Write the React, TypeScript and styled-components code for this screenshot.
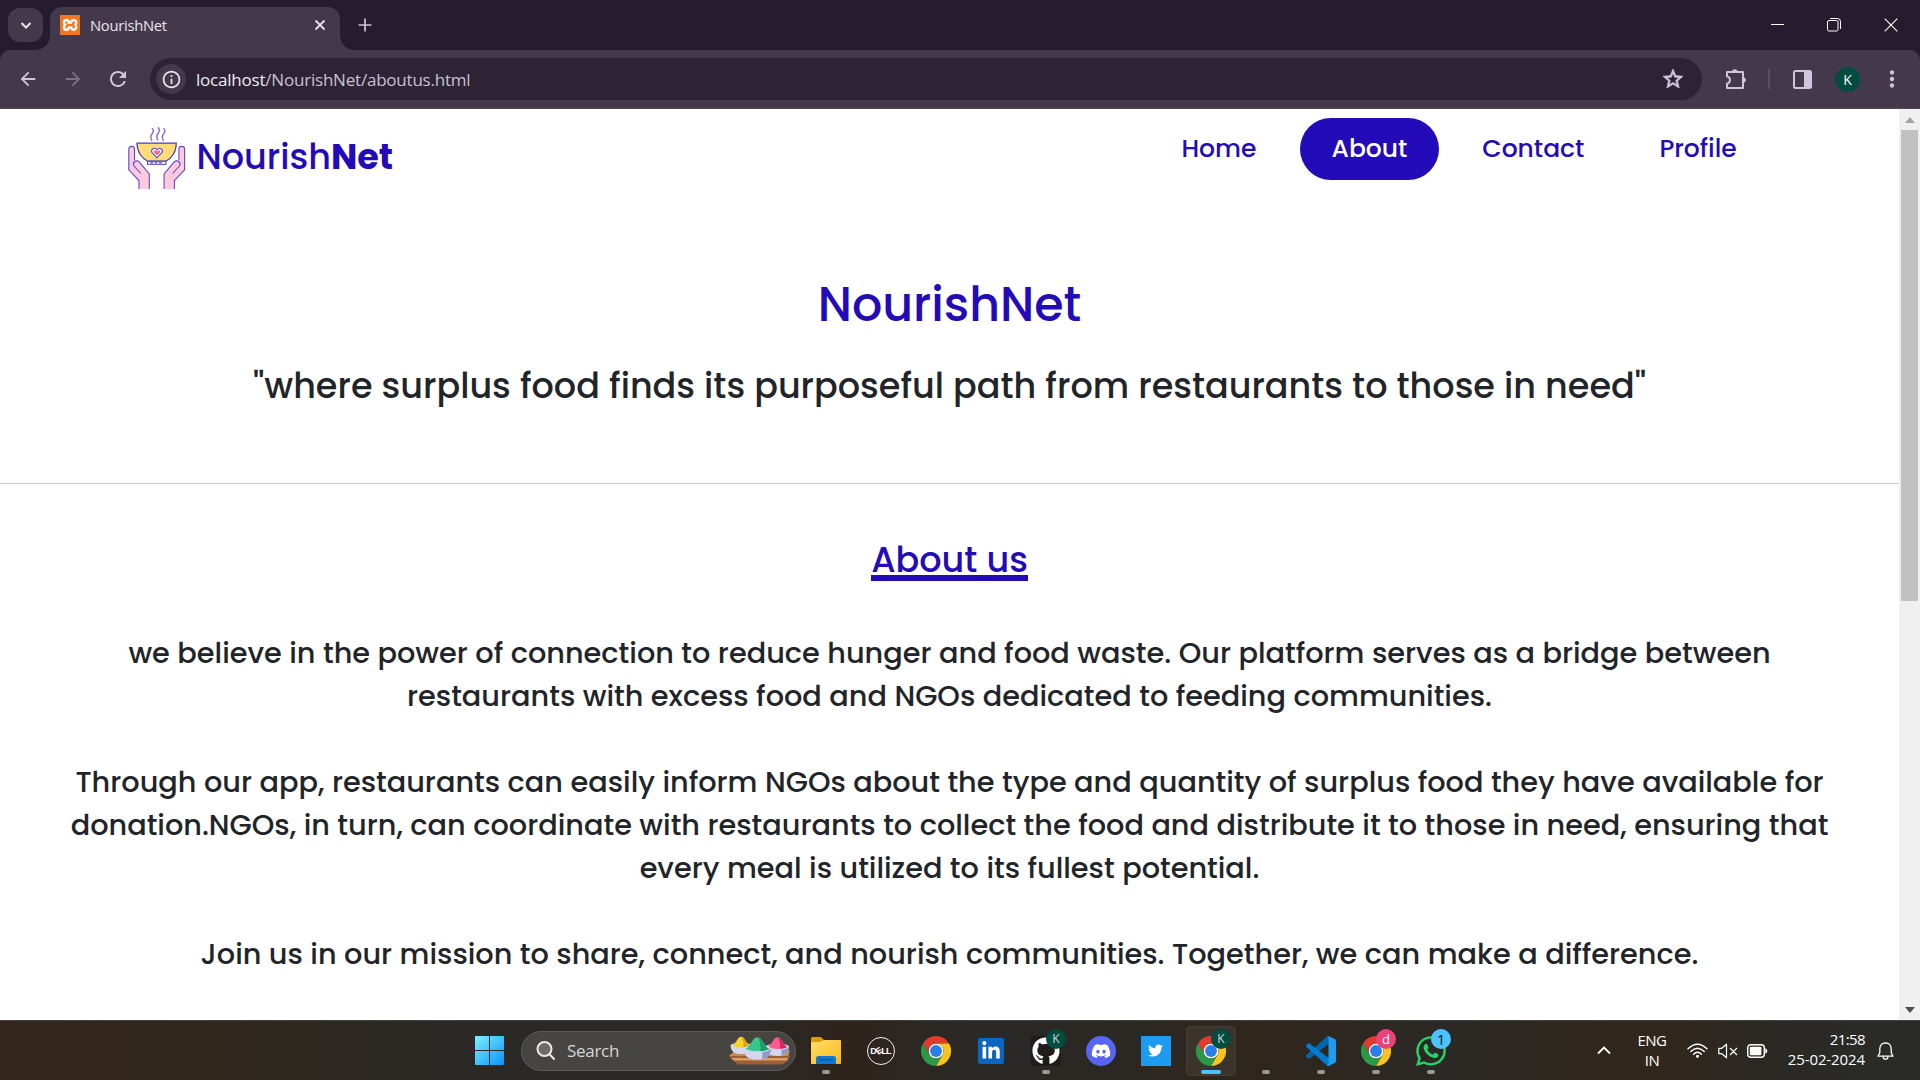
import React from "react";
import styled, { createGlobalStyle } from "styled-components";
import { FaGithub, FaDiscord, FaTwitter, FaWhatsapp, FaLinkedinIn } from "react-icons/fa";
import { SiXampp } from "react-icons/si";
import { MdStarOutline, MdArrowBack, MdArrowForward, MdRefresh, MdInfoOutline, MdMoreVert } from "react-icons/md";

const BLUE = "#230bb9";
const POPPINS = `Poppins, Inter, sans-serif`;
const SEGOE = `"Open Sans", "Noto Sans", sans-serif`;

const GlobalStyle = createGlobalStyle`
  * { box-sizing: border-box; }
  body { margin: 0; overflow: hidden; background: #fff; }
  svg { display: block; flex: none; }
`;

const Screen = styled.div`
  width: 1920px;
  height: 1080px;
  display: flex;
  flex-direction: column;
  overflow: hidden;
  font-family: ${SEGOE};
`;

/* ---------- browser chrome ---------- */

const TabStrip = styled.div`
  height: 50px;
  flex: none;
  display: flex;
  align-items: flex-end;
  background: #251c2e;
  padding: 0 1px 0 8px;
`;

const TabSearch = styled.button`
  width: 35px;
  height: 34px;
  margin: 0 7px 8px 0;
  border: 0;
  padding: 0;
  border-radius: 12px;
  background: #43394b;
  display: flex;
  align-items: center;
  justify-content: center;
`;

const Tab = styled.div`
  position: relative;
  width: 290px;
  height: 43px;
  border-radius: 12px 12px 0 0;
  background: #43394b;
  display: flex;
  align-items: center;
  padding: 0 12px 7px 10px;
  &::before, &::after {
    content: "";
    position: absolute;
    bottom: 0;
    width: 14px;
    height: 14px;
  }
  &::before {
    left: -14px;
    background: radial-gradient(circle at 0 0, transparent 13.5px, #43394b 14px);
  }
  &::after {
    right: -14px;
    background: radial-gradient(circle at 100% 0, transparent 13.5px, #43394b 14px);
  }
`;

const Favicon = styled.span`
  width: 20px;
  height: 20px;
  border-radius: 2px;
  background: #fff;
  box-shadow: inset 0 0 0 1px #e8701f;
  color: #f5761f;
  display: flex;
`;

const TabTitle = styled.span`
  flex: 1;
  margin-left: 10px;
  font-size: 14.8px;
  line-height: 20px;
  letter-spacing: -0.3px;
  color: #e9e3ec;
`;

const NewTab = styled.div`
  width: 49px;
  height: 50px;
  display: flex;
  align-items: center;
  justify-content: center;
`;

const WindowButtons = styled.div`
  margin-left: auto;
  height: 50px;
  display: flex;
`;

const WindowButton = styled.div<{ $w?: number }>`
  width: ${(p) => p.$w ?? 57}px;
  height: 49px;
  display: flex;
  align-items: center;
  justify-content: center;
`;

const ToolbarBack = styled.div`
  flex: none;
  background: #251c2e;
`;

const Toolbar = styled.div`
  height: 59px;
  background: #43394b;
  border-radius: 10px 10px 0 0;
  border-bottom: 1px solid #51475a;
  display: flex;
  align-items: center;
  color: #d2c4dc;
`;

const NavButton = styled.div<{ $dim?: boolean }>`
  width: 45px;
  height: 45px;
  display: flex;
  align-items: center;
  justify-content: center;
  color: ${(p) => (p.$dim ? "#7b7085" : "#d2c4dc")};
`;

const NavButtons = styled.div`
  display: flex;
  width: 150px;
  padding-left: 5px;
`;

const Omnibox = styled.div`
  width: 1552px;
  height: 42px;
  border-radius: 21px;
  background: #2c2335;
  display: flex;
  align-items: center;
  padding: 0 17px 0 6px;
`;

const SiteInfo = styled.span`
  width: 30px;
  height: 30px;
  border-radius: 50%;
  background: #43394b;
  color: #e9e3ec;
  display: flex;
  align-items: center;
  justify-content: center;
`;

const Url = styled.span`
  flex: 1;
  margin-left: 10px;
  padding-top: 2px;
  font-size: 17px;
  line-height: 24px;
  letter-spacing: -0.21px;
  color: #c9c1cf;
  b { font-weight: 400; color: #efe9f2; }
`;

const Star = styled(MdStarOutline)`
  stroke: currentColor;
  stroke-width: 0.7px;
`;

const ToolbarActions = styled.div`
  flex: 1;
  display: flex;
  align-items: center;
  padding-left: 23px;
`;

const Separator = styled.span`
  width: 2px;
  height: 20px;
  margin: 0 23px 0 21px;
  background: #5b5065;
`;

const Avatar = styled.span`
  width: 25px;
  height: 25px;
  margin: 0 19px 0 23px;
  border-radius: 50%;
  background: #004d40;
  color: #fff;
  font-size: 14px;
  line-height: 25px;
  text-align: center;
`;

/* ---------- page ---------- */

const Viewport = styled.div`
  flex: 1;
  min-height: 0;
  display: flex;
`;

const Page = styled.main`
  width: 1899px;
  overflow: hidden;
  background: #fff;
  color: #212529;
  font-family: ${POPPINS};
  font-weight: 500;
`;

const Header = styled.header`
  height: 167px;
  display: flex;
  justify-content: space-between;
  padding: 9px 131px 0 127.5px;
`;

const Brand = styled.div`
  display: flex;
  padding-top: 9px;
`;

const BrandName = styled.span`
  margin: 9px 0 0 11px;
  font-size: 35px;
  line-height: 42px;
  color: ${BLUE};
  b { font-weight: 700; }
`;

const Nav = styled.nav`
  display: flex;
  gap: 12.5px;
`;

const NavLink = styled.a<{ $active?: boolean }>`
  height: 62px;
  padding: 0 31.25px;
  border-radius: 31px;
  font-size: 25px;
  line-height: 61px;
  color: ${(p) => (p.$active ? "#fff" : BLUE)};
  background: ${(p) => (p.$active ? BLUE : "transparent")};
`;

const Hero = styled.section`
  height: 208px;
  border-bottom: 1px solid #c8c9ca;
  text-align: center;
`;

const Title = styled.h1`
  margin: 0 0 31px;
  font-size: 47.5px;
  line-height: 58px;
  font-weight: 500;
  color: ${BLUE};
`;

const Tagline = styled.h2`
  margin: 0;
  font-size: 35px;
  line-height: 42px;
  font-weight: 500;
`;

const About = styled.section`
  display: flex;
  flex-direction: column;
  align-items: center;
  padding: 55px 60px 0;
`;

const AboutTitle = styled.h2`
  margin: 0 0 51px;
  height: 42px;
  border-bottom: 6px solid ${BLUE};
  font-size: 35px;
  line-height: 42px;
  font-weight: 500;
  color: ${BLUE};
`;

const Paragraph = styled.p`
  margin: 0 0 43px;
  font-size: 28.75px;
  line-height: 43px;
  text-align: center;
`;

const Scrollbar = styled.div`
  width: 21px;
  background: #f0f0f0;
  display: flex;
  flex-direction: column;
  align-items: center;
  justify-content: space-between;
`;

const ScrollTop = styled.div`
  display: flex;
  flex-direction: column;
  align-items: center;
`;

const ScrollArrow = styled.div`
  height: 21px;
  display: flex;
  align-items: center;
`;

const ScrollThumb = styled.div`
  width: 17px;
  height: 471px;
  background: #c1c1c1;
`;

/* ---------- taskbar ---------- */

const Taskbar = styled.footer`
  height: 60px;
  flex: none;
  display: flex;
  align-items: center;
  border-top: 1px solid #42403d;
  background: linear-gradient(90deg, #33251a 0, #30261c 200px, #2a2926 460px, #2a2926 760px, #2f231b 850px, #2a2926 950px,
    #2b2823 1120px, #2f261c 1260px, #2b2926 1450px, #31261b 1640px, #2a2926 1800px, #2a2b28 1920px);
  color: #fff;
`;

const StartButton = styled.div`
  margin: 0 17px 0 475px;
`;

const SearchBox = styled.div`
  width: 275px;
  height: 40px;
  border-radius: 20px;
  background: #474542;
  border: 1px solid #5e5c59;
  display: flex;
  align-items: center;
  padding: 0 4px 0 14px;
`;

const SearchText = styled.span`
  flex: 1;
  margin-left: 12px;
  font-size: 17px;
  line-height: 24px;
  letter-spacing: -0.3px;
  color: #d6d5d4;
`;

const Apps = styled.div`
  display: flex;
  margin-left: 2px;
`;

const AppCell = styled.div`
  width: 55px;
  height: 59px;
  display: flex;
  flex-direction: column;
  align-items: center;
  justify-content: center;
  position: relative;
`;

const AppTile = styled.div<{ $active?: boolean }>`
  width: 50px;
  height: 50px;
  border-radius: 5px;
  display: flex;
  align-items: center;
  justify-content: center;
  background: ${(p) => (p.$active ? "#3b342c" : "transparent")};
  box-shadow: ${(p) => (p.$active ? "inset 0 0 0 1px #453f38" : "none")};
`;

const Indicator = styled.span<{ $active?: boolean }>`
  position: absolute;
  bottom: 6px;
  width: ${(p) => (p.$active ? 20 : 8)}px;
  height: 4px;
  border-radius: 2px;
  background: ${(p) => (p.$active ? "#4cc2ff" : "#9c9894")};
`;

const Badge = styled.span<{ $bg: string; $fg: string; $size: number }>`
  position: absolute;
  top: 8px;
  left: 28px;
  width: 20px;
  height: 20px;
  border-radius: 50%;
  background: ${(p) => p.$bg};
  color: ${(p) => p.$fg};
  font-size: ${(p) => p.$size}px;
  line-height: 20px;
  text-align: center;
`;

const Square = styled.span<{ $bg: string; $size: number; $r?: number }>`
  width: ${(p) => p.$size}px;
  height: ${(p) => p.$size}px;
  border-radius: ${(p) => p.$r ?? 0}px;
  background: ${(p) => p.$bg};
  color: #fff;
  display: flex;
  align-items: center;
  justify-content: center;
`;

const DellRing = styled.span`
  width: 28px;
  height: 28px;
  border: 1.5px solid #f2f2f2;
  border-radius: 50%;
  display: flex;
  align-items: center;
  justify-content: center;
  font: 700 9px/10px "Liberation Sans", Arial, sans-serif;
  letter-spacing: -0.7px;
  i { font-style: normal; transform: rotate(-35deg); }
`;

const Tray = styled.div`
  margin-left: auto;
  display: flex;
  align-items: center;
  padding-right: 26px;
`;

const Language = styled.div`
  width: 40px;
  margin: 0 15px 1px 21px;
  text-align: center;
  font-size: 15px;
  line-height: 20px;
  letter-spacing: -0.5px;
`;

const Status = styled.div`
  display: flex;
  gap: 9.5px;
  align-items: center;
`;

const Clock = styled.div`
  width: 90px;
  margin: 0 12px 3px 7px;
  text-align: right;
  font-size: 15px;
  line-height: 20px;
  letter-spacing: -0.1px;
`;

const Time = styled.div`
  letter-spacing: -0.6px;
`;

/* ---------- drawings ---------- */

const Hand = () => (
  <g>
    <path d="M11 62V53.5L.8 42.8V22.2C.8 18.4 6.5 18.4 6.5 22.2V36C8 33.6 11 34.2 12.6 36L21.3 46.5V62Z" fill="#ffcade" />
    <path d="M11 62V53.5L.8 42.8V22.2C.8 18.4 6.5 18.4 6.5 22.2V33.5M12.8 46.5L6 39C3.8 35.8 8.2 32.2 11.2 35L21.3 47V62" fill="none" stroke="#5b4cc8" strokeWidth="1.1" />
  </g>
);

const BrandMark = () => (
  <svg width="58" height="63" viewBox="0 0 58 63">
    <g fill="none" stroke="#7c70d6" strokeWidth="1.4">
      <path d="M24 1.2Q26.5 3.5 24.3 6.5Q21.5 10 24 14" />
      <path d="M30 .3Q32.5 3 30.3 6Q27.5 9.5 30 13.5" />
      <path d="M35.5 1.2Q38 3.5 35.8 6.5Q33 10 35.5 14" />
    </g>
    <path d="M9 16.2H48.3C48.3 25 43.5 31.5 38 34H19.5C14 31.5 9 25 9 16.2Z" fill="#ffdc78" stroke="#4a3ac2" strokeWidth="1.2" />
    <rect x="19.5" y="34.3" width="18.5" height="3" fill="#fff" stroke="#4a3ac2" strokeWidth="1" />
    <path d="M22 35.8H35.5" stroke="#4a3ac2" strokeWidth="1" strokeDasharray="3 1.5" />
    <path d="M29 30.8L23.9 25.4C22.4 22.5 26.5 19.6 29 22.7C31.5 19.6 35.6 22.5 34.1 25.4Z" fill="#fff" stroke="#5b4cc8" strokeWidth="1.1" />
    <path d="M29 28.5L25.9 25.2C25.6 22.9 28 22.6 29 24.4C30 22.6 32.4 22.9 32.1 25.2Z" fill="#ff5f88" />
    <Hand />
    <g transform="matrix(-1 0 0 1 57.4 0)"><Hand /></g>
  </svg>
);

const ChromeIcon = () => (
  <svg width="30" height="30" viewBox="0 0 48 48">
    <circle cx="24" cy="24" r="12" fill="#fff" />
    <path fill="#e23b2e" d="M24 12H44.78a23.99 23.99 0 0 0-41.56 0L13.61 30A12 12 0 0 1 24 12Z" />
    <path fill="#fcc31e" d="M34.39 30L24 48A23.99 23.99 0 0 0 44.78 12H24A12 12 0 0 1 34.39 30Z" />
    <path fill="#2a9a48" d="M13.61 30L3.22 12A23.99 23.99 0 0 0 24 48L34.39 30A12 12 0 0 1 13.61 30Z" />
    <circle cx="24" cy="24" r="9.5" fill="#2b7de9" />
  </svg>
);

const ExtensionIcon = () => (
  <svg width="22" height="22" viewBox="0 0 22 22" fill="none" stroke="#d2c4dc" strokeWidth="2" strokeLinejoin="round">
    <path d="M2 4H18V20H2V15.8Q5 14.8 5 12T2 8.2Z" />
    <path d="M7 4A2.8 2.8 0 0 1 12.6 4ZM18 9.2A2.8 2.8 0 0 1 18 14.8Z" fill="#d2c4dc" stroke="none" />
  </svg>
);

const WindowsLogo = () => (
  <svg width="29" height="29" viewBox="0 0 29 29">
    <defs>
      <linearGradient id="win" x1="0" y1="0" x2="29" y2="29" gradientUnits="userSpaceOnUse">
        <stop stopColor="#7df0ff" />
        <stop offset="1" stopColor="#0a93fb" />
      </linearGradient>
    </defs>
    <path fill="url(#win)" d="M1 0H14V14H0V1Q0 0 1 0ZM15 0H28Q29 0 29 1V14H15ZM0 15H14V29H1Q0 29 0 28ZM15 15H29V28Q29 29 28 29H15Z" />
  </svg>
);

const Bowl = ({ x, y, s, a, b }: { x: number; y: number; s: number; a: string; b: string }) => (
  <g transform={`translate(${x} ${y}) scale(${s})`}>
    <path d="M0 11.5Q0 9 6 8.5H22Q28 9 28 11.5Q27 21 19 22Q14 23 9 22Q1 21 0 11.5Z" fill="#d4d6f0" />
    <path d="M19 15Q25 14 28 11.5Q27 21 19 22Z" fill="#9598cf" />
    <path d="M2 11.5C7 9 9 1.5 12 .3Q14 -.8 16 .3C19 1.5 21 9 26 11.5Q14 16.5 2 11.5Z" fill={a} />
    <path d="M15 0Q17 .3 18 2.5C20 7 22 10 26 11.5Q22 13.5 17 13.8Q18 6 15 0Z" fill={b} />
  </g>
);

const HoliBowls = () => (
  <svg width="63" height="30" viewBox="0 0 63 30">
    <path d="M1 20L7 14.5H62L60 22L55 26H7Z" fill="#c98b50" />
    <path d="M1 20H62Q60 26 54 28.5H10Z" fill="#9b5f33" />
    <path d="M3 22H60L59 24.5H6Z" fill="#dba066" />
    <Bowl x={2.5} y={1} s={0.76} a="#f6d32c" b="#d7a413" />
    <Bowl x={38} y={1.5} s={0.82} a="#ff5b93" b="#d8245f" />
    <Bowl x={15.5} y={1.5} s={0.99} a="#38c58c" b="#1d9d69" />
  </svg>
);

const ExplorerIcon = () => (
  <svg width="30" height="27" viewBox="0 0 30 27">
    <defs>
      <linearGradient id="folder" x1="0" y1="0" x2="1" y2="1">
        <stop stopColor="#ffdf6b" />
        <stop offset="1" stopColor="#fcb815" />
      </linearGradient>
    </defs>
    <path d="M0 1.5Q0 0 1.5 0H10L13 3V8H0Z" fill="#dd9b08" />
    <path d="M0 5H9L13 3H29Q30 3 30 4V26Q30 27 29 27H1Q0 27 0 26Z" fill="url(#folder)" />
    <path d="M5 27V21.5Q5 19 7.5 19H22.5Q25 19 25 21.5V27Z" fill="#0f78d0" />
    <path d="M8.5 22.7H21.5" stroke="#0a4f9a" strokeWidth="1.2" />
  </svg>
);

const VsCodeIcon = () => (
  <svg width="30" height="30" viewBox="0 0 100 100">
    <path fill="#0065a9" d="M96.5 10.8L75.9.9a6.2 6.2 0 0 0-7.1 1.2L1.3 63.6a4.2 4.2 0 0 0 0 6.2l5.5 5a4.2 4.2 0 0 0 5.3.2L93.4 13.4A4.1 4.1 0 0 1 100 16.7v-.2a6.3 6.3 0 0 0-3.5-5.7Z" />
    <path fill="#007acc" d="M96.5 89.2L75.9 99.1a6.2 6.2 0 0 1-7.1-1.2L1.3 36.4a4.2 4.2 0 0 1 0-6.2l5.5-5a4.2 4.2 0 0 1 5.3-.2L93.4 86.6A4.1 4.1 0 0 0 100 83.3v.2a6.3 6.3 0 0 1-3.5 5.7Z" />
    <path fill="#1f9cf0" d="M75.9 99.1a6.2 6.2 0 0 1-7.1-1.2A3.7 3.7 0 0 0 75 95.3V4.7a3.7 3.7 0 0 0-6.2-2.6A6.2 6.2 0 0 1 75.9.9L96.5 10.8A6.3 6.3 0 0 1 100 16.5V83.5a6.3 6.3 0 0 1-3.5 5.7Z" />
  </svg>
);

const CaretIcon = ({ up }: { up?: boolean }) => (
  <svg width="14" height="9" viewBox="0 0 14 9">
    <path d={up ? "M1 7.5L7 1.5L13 7.5" : "M2.5 2L7 6.5L11.5 2"} fill="none" stroke={up ? "#fff" : "#e9e3ec"} strokeWidth={up ? 1.8 : 2} />
  </svg>
);

const WifiIcon = () => (
  <svg width="21" height="16" viewBox="0 0 21 16" fill="none" stroke="#fff" strokeWidth="1.4" strokeLinecap="round">
    <path d="M1 5.8Q10.5 -3.4 20 5.8M3.8 8.6Q10.5 2 17.2 8.6M6.6 11.2Q10.5 7.3 14.4 11.2" />
    <circle cx="10.5" cy="13.3" r="1.4" fill="#fff" stroke="none" />
    <circle cx="10.5" cy="13.3" r=".6" />
  </svg>
);

const MutedIcon = () => (
  <svg width="20" height="16" viewBox="0 0 20 16" fill="none" stroke="#fff" strokeWidth="1.2" strokeLinejoin="round">
    <path d="M.8 5.3H3.8L8.5 1.2V14.8L3.8 10.7H.8ZM12 5L19 12M19 5L12 12" />
  </svg>
);

const BatteryIcon = () => (
  <svg width="21" height="14" viewBox="0 0 21 14">
    <rect x=".7" y=".7" width="16.6" height="12.6" rx="3" fill="none" stroke="#fff" strokeWidth="1.4" />
    <rect x="2.8" y="2.8" width="11.6" height="8.4" rx="1" fill="#fff" />
    <path d="M18.3 4.3Q20.3 5 20.3 7T18.3 9.7Z" fill="#fff" />
  </svg>
);

const BellIcon = () => (
  <svg width="17" height="18" viewBox="0 0 17 18" fill="none" stroke="#fff" strokeWidth="1.3" strokeLinejoin="round">
    <path d="M1 14.2L2.8 10.5V6.5Q3.2 1 8.5 .8Q13.8 1 14.2 6.5V10.5L16 14.2ZM6 14.8Q6.5 17.2 8.5 17.2T11 14.8" />
  </svg>
);

/* ---------- content ---------- */

const links = [
  { text: "Home" },
  { text: "About", active: true },
  { text: "Contact" },
  { text: "Profile" },
];

const paragraphs = [
  "we believe in the power of connection to reduce hunger and food waste. Our platform serves as a bridge between restaurants with excess food and NGOs dedicated to feeding communities.",
  "Through our app, restaurants can easily inform NGOs about the type and quantity of surplus food they have available for donation.NGOs, in turn, can coordinate with restaurants to collect the food and distribute it to those in need, ensuring that every meal is utilized to its fullest potential.",
  "Join us in our mission to share, connect, and nourish communities. Together, we can make a difference.",
];

type TaskApp = {
  id: string;
  icon: React.ReactNode;
  running?: boolean;
  active?: boolean;
  badge?: { text: string; bg: string; fg: string; size: number };
};

const profileBadge = { text: "K", bg: "#004d40", fg: "#cfd8d6", size: 12 };

const apps: TaskApp[] = [
  { id: "explorer", icon: <ExplorerIcon />, running: true },
  { id: "dell", icon: <DellRing>D<i>E</i>LL</DellRing> },
  { id: "chrome", icon: <ChromeIcon /> },
  { id: "linkedin", icon: <Square $bg="#0a66c2" $size={26} $r={2}><FaLinkedinIn size={20} /></Square> },
  { id: "github", icon: <Square $bg="#1f1c1b" $size={30}><FaGithub size={28} /></Square>, running: true, badge: profileBadge },
  { id: "discord", icon: <Square $bg="#5865f2" $size={30} $r={15}><FaDiscord size={20} /></Square> },
  { id: "twitter", icon: <Square $bg="#1d9bf0" $size={30}><FaTwitter size={15} /></Square> },
  { id: "chrome-k", icon: <ChromeIcon />, running: true, active: true, badge: profileBadge },
  { id: "blank", icon: null, running: true },
  { id: "vscode", icon: <VsCodeIcon />, running: true },
  { id: "chrome-d", icon: <ChromeIcon />, running: true, badge: { text: "d", bg: "#ec407a", fg: "#fff", size: 13 } },
  { id: "whatsapp", icon: <FaWhatsapp size={34} color="#25d366" />, running: true, badge: { text: "1", bg: "#4cc2ff", fg: "#10202b", size: 15 } },
];

export default function App() {
  return (
    <Screen>
      <GlobalStyle />
      <TabStrip>
        <TabSearch><CaretIcon /></TabSearch>
        <Tab>
          <Favicon><SiXampp size={20} /></Favicon>
          <TabTitle>NourishNet</TabTitle>
          <svg width="16" height="16" viewBox="0 0 16 16"><path d="M3.5 3.5L12.5 12.5M12.5 3.5L3.5 12.5" stroke="#e9e3ec" strokeWidth="1.8" /></svg>
        </Tab>
        <NewTab>
          <svg width="14" height="14" viewBox="0 0 14 14"><path d="M7 .5V13.5M.5 7H13.5" stroke="#d2c4dc" strokeWidth="1.7" /></svg>
        </NewTab>
        <WindowButtons>
          <WindowButton $w={55}><svg width="13" height="13"><path d="M0 6.5H13" stroke="#fff" /></svg></WindowButton>
          <WindowButton>
            <svg width="14" height="14" viewBox="0 0 14 14" fill="none" stroke="#fff">
              <rect x=".5" y="2.5" width="10.5" height="10.5" rx="1.5" />
              <path d="M3 .5H10.5Q13.5 .5 13.5 3.5V11" />
            </svg>
          </WindowButton>
          <WindowButton><svg width="14" height="14"><path d="M.7 .7L13.3 13.3M13.3 .7L.7 13.3" stroke="#fff" strokeWidth="1.1" /></svg></WindowButton>
        </WindowButtons>
      </TabStrip>
      <ToolbarBack>
        <Toolbar>
          <NavButtons>
            <NavButton><MdArrowBack size={22} /></NavButton>
            <NavButton $dim><MdArrowForward size={22} /></NavButton>
            <NavButton><MdRefresh size={24} /></NavButton>
          </NavButtons>
          <Omnibox>
            <SiteInfo><MdInfoOutline size={21} /></SiteInfo>
            <Url><b>localhost</b>/NourishNet/aboutus.html</Url>
            <Star size={24} />
          </Omnibox>
          <ToolbarActions>
            <ExtensionIcon />
            <Separator />
            <svg width="19" height="19" viewBox="0 0 19 19">
              <rect x="1" y="1" width="17" height="17" rx="1.5" fill="none" stroke="#d2c4dc" strokeWidth="2" />
              <path d="M11 1H18V18H11Z" fill="#d2c4dc" />
            </svg>
            <Avatar>K</Avatar>
            <MdMoreVert size={26} />
          </ToolbarActions>
        </Toolbar>
      </ToolbarBack>

      <Viewport>
        <Page>
          <Header>
            <Brand>
              <BrandMark />
              <BrandName>Nourish<b>Net</b></BrandName>
            </Brand>
            <Nav>
              {links.map((l) => (
                <NavLink key={l.text} $active={l.active}>{l.text}</NavLink>
              ))}
            </Nav>
          </Header>
          <Hero>
            <Title>NourishNet</Title>
            <Tagline>"where surplus food finds its purposeful path from restaurants to those in need"</Tagline>
          </Hero>
          <About>
            <AboutTitle>About us</AboutTitle>
            {paragraphs.map((text, i) => <Paragraph key={i}>{text}</Paragraph>)}
          </About>
        </Page>
        <Scrollbar>
          <ScrollTop>
            <ScrollArrow><svg width="10" height="6"><path d="M0 6L5 0L10 6Z" fill="#a3a3a3" /></svg></ScrollArrow>
            <ScrollThumb />
          </ScrollTop>
          <ScrollArrow><svg width="10" height="6"><path d="M0 0L5 6L10 0Z" fill="#505050" /></svg></ScrollArrow>
        </Scrollbar>
      </Viewport>

      <Taskbar>
        <StartButton><WindowsLogo /></StartButton>
        <SearchBox>
          <svg width="19" height="19" viewBox="0 0 19 19" fill="none" stroke="#e8e8e8" strokeWidth="2">
            <circle cx="8.5" cy="8" r="7" fill="#6d6b69" /><path d="M13.3 13L18 18" strokeLinecap="round" />
          </svg>
          <SearchText>Search</SearchText>
          <HoliBowls />
        </SearchBox>
        <Apps>
          {apps.map((a) => (
            <AppCell key={a.id}>
              <AppTile $active={a.active}>{a.icon}</AppTile>
              {a.badge && <Badge $bg={a.badge.bg} $fg={a.badge.fg} $size={a.badge.size}>{a.badge.text}</Badge>}
              {a.running && <Indicator $active={a.active} />}
            </AppCell>
          ))}
        </Apps>
        <Tray>
          <CaretIcon up />
          <Language>ENG<br />IN</Language>
          <Status><WifiIcon /><MutedIcon /><BatteryIcon /></Status>
          <Clock><Time>21:58</Time>25-02-2024</Clock>
          <BellIcon />
        </Tray>
      </Taskbar>
    </Screen>
  );
}
